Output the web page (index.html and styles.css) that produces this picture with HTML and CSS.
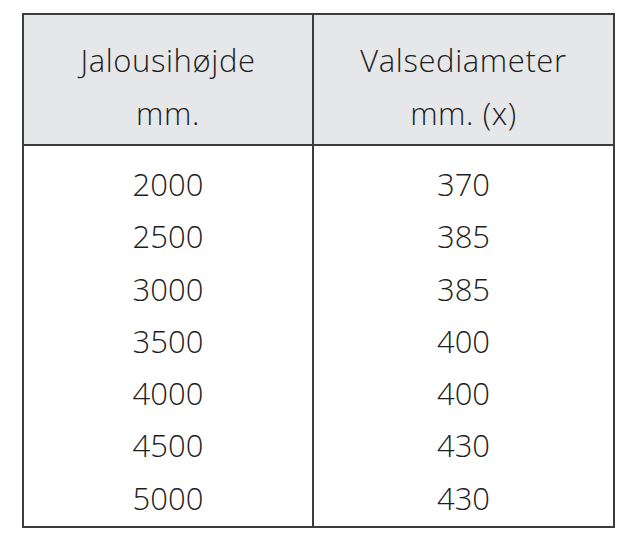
FILE: index.html
```html
<!DOCTYPE html>
<html lang="da">
<head>
<meta charset="utf-8">
<link rel="stylesheet" href="styles.css">
</head>
<body>
<table class="spec">
  <thead>
    <tr>
      <th class="col-left">Jalousihøjde<br>mm.</th>
      <th class="col-right">Valsediameter<br>mm. (x)</th>
    </tr>
  </thead>
  <tbody>
    <tr class="first"><td>2000</td><td>370</td></tr>
    <tr><td>2500</td><td>385</td></tr>
    <tr><td>3000</td><td>385</td></tr>
    <tr><td>3500</td><td>400</td></tr>
    <tr><td>4000</td><td>400</td></tr>
    <tr><td>4500</td><td>430</td></tr>
    <tr class="last"><td>5000</td><td>430</td></tr>
  </tbody>
</table>
</body>
</html>
```
FILE: styles.css
```css
html, body {
  margin: 0;
  padding: 0;
  background: #ffffff;
}

body {
  padding: 13px 0 0 22px;
}

.spec {
  border-collapse: collapse;
  width: 593px;
  font-family: "Open Sans", "Noto Sans", sans-serif;
  font-weight: 300;
  font-size: 31px;
  color: #1e1e1e;
  table-layout: fixed;
}

.spec th,
.spec td {
  border-left: 2px solid #3c3c3c;
  border-right: 2px solid #3c3c3c;
  text-align: center;
  padding: 0;
}

.col-left {
  width: 288px;
}

.spec thead th {
  background: #e6e7e9;
  font-weight: 300;
  line-height: 53px;
  letter-spacing: 0.6px;
  padding: 19px 0 4px;
  border-top: 2px solid #3c3c3c;
  border-bottom: 2px solid #3c3c3c;
}

.spec tbody td {
  line-height: 52.3px;
}

.spec tbody tr.first td {
  padding-top: 12px;
}

.spec tbody tr.last td {
  padding-bottom: 2px;
  border-bottom: 2px solid #3c3c3c;
}
```
